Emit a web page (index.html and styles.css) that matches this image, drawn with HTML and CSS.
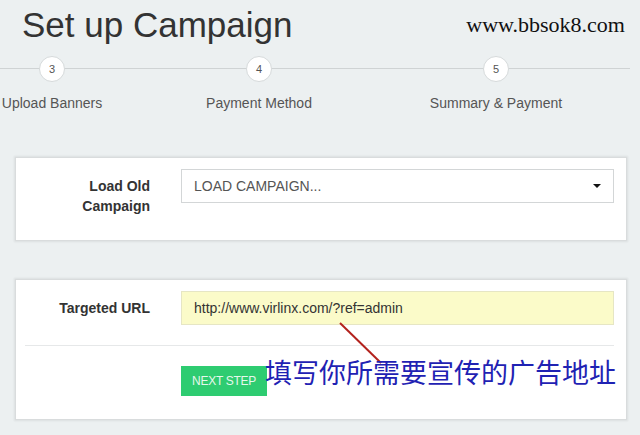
FILE: index.html
```html
<!DOCTYPE html>
<html lang="en">
<head>
<meta charset="utf-8">
<title>Set up Campaign</title>
<link rel="stylesheet" href="styles.css">
</head>
<body>
<div class="page">
  <header class="header">
    <h1 class="title">Set up Campaign</h1>
    <div class="site">www.bbsok8.com</div>
  </header>

  <div class="steps">
    <div class="step step-3">
      <div class="circle">3</div>
      <div class="step-label">Upload Banners</div>
    </div>
    <div class="step step-4">
      <div class="circle">4</div>
      <div class="step-label">Payment Method</div>
    </div>
    <div class="step step-5">
      <div class="circle">5</div>
      <div class="step-label">Summary &amp; Payment</div>
    </div>
  </div>

  <section class="card card-load">
    <div class="row">
      <div class="label">Load Old<br>Campaign</div>
      <div class="control select">
        <span>LOAD CAMPAIGN...</span>
        <span class="caret"></span>
      </div>
    </div>
  </section>

  <section class="card card-url">
    <div class="row">
      <div class="label">Targeted URL</div>
      <div class="control input">http://www.virlinx.com/?ref=admin</div>
    </div>
    <div class="divider"></div>
    <div class="actions">
      <button class="btn" type="button">NEXT STEP</button>
    </div>
  </section>

  <svg class="pointer" width="60" height="60" viewBox="0 0 60 60" aria-hidden="true">
    <line x1="2" y1="2" x2="43" y2="42" stroke="#b3221d" stroke-width="2"/>
  </svg>
  <div class="note">填写你所需要宣传的广告地址</div>
</div>
</body>
</html>
```

FILE: styles.css
```css
html, body {
  margin: 0;
  padding: 0;
}

body {
  background: #ecf0f1;
  font-family: "Liberation Sans", Arial, sans-serif;
  color: #333;
  width: 640px;
  height: 435px;
  overflow: hidden;
}

.page {
  position: relative;
  width: 640px;
  height: 435px;
}

.header {
  display: flex;
  justify-content: space-between;
  align-items: flex-start;
  height: 56px;
  padding: 0 15px 0 22px;
}

.title {
  margin: 0;
  padding-top: 7px;
  font-weight: normal;
  font-size: 35px;
  line-height: 1;
  color: #333;
}

.site {
  padding-top: 14px;
  font-family: "Liberation Serif", "Times New Roman", serif;
  font-size: 22px;
  line-height: 1;
  color: #111;
}

.steps {
  display: flex;
  width: 630px;
  background: linear-gradient(#cfd3d4, #cfd3d4) no-repeat 0 12px / 630px 1px;
}

.step {
  display: flex;
  flex-direction: column;
  align-items: center;
  width: 160px;
  flex: none;
}

.step-3 { margin-left: -28px; }
.step-4 { margin-left: 47px; }
.step-5 { margin-left: 77px; }

.circle {
  box-sizing: border-box;
  width: 26px;
  height: 26px;
  border-radius: 50%;
  background: #fff;
  border: 1px solid #d6dadb;
  font-size: 11px;
  line-height: 24px;
  text-align: center;
  color: #555;
}

.step-label {
  margin-top: 11px;
  font-size: 14px;
  line-height: 20px;
  color: #555;
  white-space: nowrap;
}

.card {
  box-sizing: border-box;
  width: 612px;
  margin-left: 15px;
  background: #fff;
  border: 1px solid #d9dcdd;
  box-shadow: 0 0 2px 1px rgba(0, 0, 0, 0.07);
  padding: 11px 12px 0 9px;
}

.card-load {
  margin-top: 44px;
  height: 84px;
}

.card-url {
  margin-top: 38px;
  height: 141px;
}

.row {
  display: flex;
  align-items: flex-start;
}

.label {
  width: 125px;
  flex: none;
  padding-top: 7px;
  text-align: right;
  font-weight: bold;
  font-size: 14px;
  line-height: 20px;
  color: #333;
}

.control {
  box-sizing: border-box;
  margin-left: 31px;
  width: 433px;
  height: 34px;
  padding: 0 12px;
  display: flex;
  align-items: center;
  font-size: 14px;
}

.select {
  justify-content: space-between;
  border: 1px solid #d3d6d7;
  color: #555;
  background: #fff;
}

.caret {
  width: 0;
  height: 0;
  border-left: 4px solid transparent;
  border-right: 4px solid transparent;
  border-top: 4px solid #111;
  margin-right: 0;
}

.input {
  background: #fbfbc9;
  border: 1px solid #e6e6c4;
  color: #333;
}

.divider {
  height: 0;
  border-top: 1px solid #e6e8e9;
  margin: 20px 0 20px 0;
}

.actions {
  display: flex;
  padding-left: 156px;
}

.btn {
  width: 86px;
  height: 30px;
  border: none;
  background: #2ecc71;
  color: #e6f7ec;
  font-family: "Liberation Sans", Arial, sans-serif;
  font-size: 12px;
  letter-spacing: -0.3px;
  padding: 0;
}

.pointer {
  position: absolute;
  left: 338px;
  top: 321px;
}

.note {
  position: absolute;
  left: 265px;
  top: 358px;
  font-family: "Noto Sans CJK SC", sans-serif;
  font-size: 27px;
  line-height: 1;
  color: #1f22b3;
  white-space: nowrap;
}
```
